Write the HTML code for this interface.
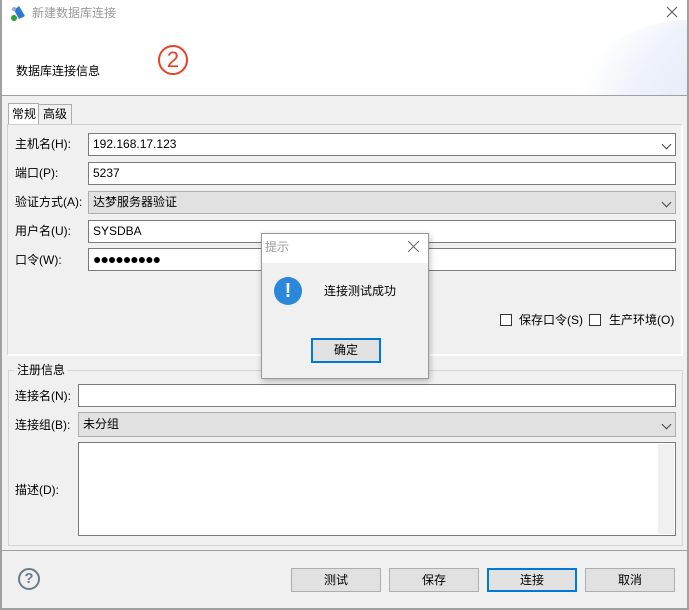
<!DOCTYPE html>
<html><head><meta charset="utf-8"><style>
*{box-sizing:border-box;margin:0;padding:0}
body{width:689px;height:610px;position:relative;overflow:hidden;background:#f0f0f0;font-family:"Liberation Sans","Noto Sans CJK SC",sans-serif;font-size:12px;color:#000}
.a{position:absolute}
.in{position:absolute;background:#fff;border:1px solid #7a7a7a;padding-left:4px;line-height:20px;font-size:12px}
.cb{background:#e1e1e1;border-color:#adadad}
.lbl{position:absolute;font-size:12px;line-height:14px}
.btn{position:absolute;background:#e1e1e1;border:1px solid #adadad;text-align:center;line-height:22px;font-size:12px}
.chev{position:absolute;right:5px;top:7px;width:7px;height:7px;border-right:1px solid #444;border-bottom:1px solid #444;transform:rotate(45deg)}
</style></head><body>
<div class="a" style="left:0;top:0;width:689px;height:96px;background:#fff;border-bottom:1px solid #a0a0a0;overflow:hidden">
 <div class="a" style="left:560px;top:20px;width:260px;height:220px;border-radius:50%;background:radial-gradient(circle at 80% 60%,#d8e2f6,#eef2fb 60%,#fff 80%)"></div>
</div>
<div class="a" style="left:0;top:0;width:2px;height:610px;background:#a0a0a0"></div>
<div class="a" style="left:687px;top:0;width:2px;height:610px;background:#a0a0a0"></div>
<div class="a" style="left:0;top:608px;width:689px;height:2px;background:#a0a0a0"></div>
<svg class="a" style="left:9px;top:4px" width="18" height="18"><path d="M5 6 L10 2 L16 12 L10 15 Z" fill="#2a7bd0"/><circle cx="5" cy="14" r="3" fill="#2aa23a"/><circle cx="5" cy="5" r="2" fill="#9ac"/></svg>
<div class="lbl" style="left:32px;top:6px;color:#999;font-size:12px">新建数据库连接</div>
<svg class="a" style="left:666px;top:6px" width="12" height="12"><path d="M1 1L11 11M11 1L1 11" stroke="#555" stroke-width="1"/></svg>
<div class="lbl" style="left:16px;top:64px">数据库连接信息</div>
<div class="a" style="left:158px;top:45px;width:30px;height:30px;border:2px solid #e8412a;border-radius:50%;color:#e8412a;font-size:22px;line-height:26px;text-align:center">2</div>
<div class="a" style="left:8px;top:103px;width:31px;height:22px;background:#fff;border:1px solid #adadad;border-bottom:none"></div>
<div class="lbl" style="left:12px;top:107px">常规</div>
<div class="a" style="left:39px;top:104px;width:33px;height:20px;border:1px solid #adadad;border-left:none;border-bottom:none"></div>
<div class="lbl" style="left:43px;top:107px">高级</div>
<div class="a" style="left:7px;top:124px;width:676px;height:232px;border:1px solid #d0d0d0;border-bottom:2px solid #fff;border-right:2px solid #fff"></div>
<div class="lbl" style="left:15px;top:137px">主机名(H):</div>
<div class="in" style="left:88px;top:133px;width:588px;height:23px">192.168.17.123<div class="chev"></div></div>
<div class="lbl" style="left:15px;top:166px">端口(P):</div>
<div class="in" style="left:88px;top:162px;width:588px;height:23px">5237</div>
<div class="lbl" style="left:15px;top:195px">验证方式(A):</div>
<div class="in cb" style="left:88px;top:191px;width:588px;height:23px">达梦服务器验证<div class="chev"></div></div>
<div class="lbl" style="left:15px;top:224px">用户名(U):</div>
<div class="in" style="left:88px;top:220px;width:588px;height:23px">SYSDBA</div>
<div class="lbl" style="left:15px;top:253px">口令(W):</div>
<div class="in" style="left:88px;top:248px;width:588px;height:23px;font-size:14px;letter-spacing:-1px">●●●●●●●●●</div>
<div class="a" style="left:500px;top:314px;width:12px;height:12px;border:1px solid #333;background:#fff"></div>
<div class="lbl" style="left:519px;top:313px">保存口令(S)</div>
<div class="a" style="left:589px;top:314px;width:12px;height:12px;border:1px solid #333;background:#fff"></div>
<div class="lbl" style="left:609px;top:313px">生产环境(O)</div>
<div class="a" style="left:8px;top:370px;width:675px;height:176px;border:1px solid #d5d5d5"></div>
<div class="lbl" style="left:14px;top:363px;background:#f0f0f0;padding:0 3px">注册信息</div>
<div class="lbl" style="left:15px;top:389px">连接名(N):</div>
<div class="in" style="left:78px;top:384px;width:598px;height:23px"></div>
<div class="lbl" style="left:15px;top:418px">连接组(B):</div>
<div class="in cb" style="left:78px;top:412px;width:598px;height:25px;line-height:22px">未分组<div class="chev" style="top:8px"></div></div>
<div class="lbl" style="left:15px;top:483px">描述(D):</div>
<div class="in" style="left:78px;top:442px;width:598px;height:94px"><div class="a" style="right:1px;top:1px;width:16px;height:90px;background:#f0f0f0"></div></div>
<div class="a" style="left:2px;top:550px;width:685px;height:1px;background:#a0a0a0"></div>
<div class="a" style="left:18px;top:568px;width:22px;height:22px;border:2px solid #6a7a90;border-radius:50%;color:#6a7a90;font-weight:bold;font-size:15px;line-height:18px;text-align:center">?</div>
<div class="btn" style="left:291px;top:568px;width:90px;height:24px">测试</div>
<div class="btn" style="left:389px;top:568px;width:90px;height:24px">保存</div>
<div class="btn" style="left:487px;top:568px;width:90px;height:24px;border:2px solid #0078d7;line-height:20px">连接</div>
<div class="btn" style="left:585px;top:568px;width:90px;height:24px">取消</div>
<div class="a" style="left:261px;top:233px;width:168px;height:146px;background:#f0f0f0;border:1px solid #999;box-shadow:1px 2px 6px rgba(0,0,0,.25)">
 <div class="a" style="left:0;top:0;width:166px;height:29px;background:#fff"></div>
 <div class="lbl" style="left:3px;top:6px;color:#999">提示</div>
 <svg class="a" style="left:146px;top:7px" width="11" height="11"><path d="M0 0L11 11M11 0L0 11" stroke="#666"/></svg>
 <div class="a" style="left:12px;top:43px;width:28px;height:28px;border-radius:50%;background:#2b87d9;color:#fff;font-weight:bold;font-size:20px;line-height:28px;text-align:center">!</div>
 <div class="lbl" style="left:62px;top:50px">连接测试成功</div>
 <div class="btn" style="left:49px;top:104px;width:70px;height:25px;border:2px solid #0078d7;line-height:21px">确定</div>
</div>
</body></html>
